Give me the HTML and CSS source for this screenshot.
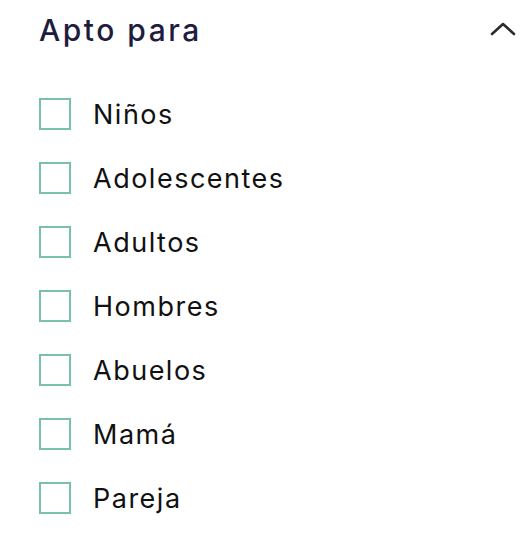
FILE: index.html
```html
<!DOCTYPE html>
<html lang="es">
<head>
<meta charset="utf-8">
<link rel="stylesheet" href="styles.css">
</head>
<body>
<section class="filter">
  <header class="filter-head">
    <h2 class="filter-title">Apto para</h2>
    <svg class="chevron" width="26" height="16" viewBox="0 0 26 16"><path d="M2 13 L13 3 L24 13" fill="none" stroke="#2b2b2b" stroke-width="2.6" stroke-linecap="round" stroke-linejoin="round"/></svg>
  </header>
  <ul class="options">
    <li class="option"><span class="box"></span><span class="label">Niños</span></li>
    <li class="option"><span class="box"></span><span class="label">Adolescentes</span></li>
    <li class="option"><span class="box"></span><span class="label">Adultos</span></li>
    <li class="option"><span class="box"></span><span class="label">Hombres</span></li>
    <li class="option"><span class="box"></span><span class="label">Abuelos</span></li>
    <li class="option"><span class="box"></span><span class="label">Mamá</span></li>
    <li class="option"><span class="box"></span><span class="label">Pareja</span></li>
  </ul>
</section>
</body>
</html>
```
FILE: styles.css
```css
html, body {
  margin: 0;
  padding: 0;
  background: #ffffff;
}
body {
  font-family: "Inter", "Noto Sans", sans-serif;
}
.filter {
  padding: 10px 14px 0 39px;
}
.filter-head {
  display: flex;
  align-items: center;
  justify-content: space-between;
  height: 40px;
}
.filter-title {
  margin: 0;
  font-size: 30px;
  font-weight: 500;
  color: #1f1d3e;
  letter-spacing: 2.5px;
}
.chevron {
  margin-right: 2px;
  margin-top: -2px;
}
.options {
  list-style: none;
  margin: 48px 0 0 0;
  padding: 0;
  display: flex;
  flex-direction: column;
  gap: 32px;
}
.option {
  display: flex;
  align-items: center;
  gap: 22px;
  height: 32px;
}
.box {
  width: 32px;
  height: 32px;
  box-sizing: border-box;
  border: 2px solid #78c2aa;
  flex: none;
}
.label {
  font-size: 27px;
  color: #111111;
  letter-spacing: 1.5px;
}
```
